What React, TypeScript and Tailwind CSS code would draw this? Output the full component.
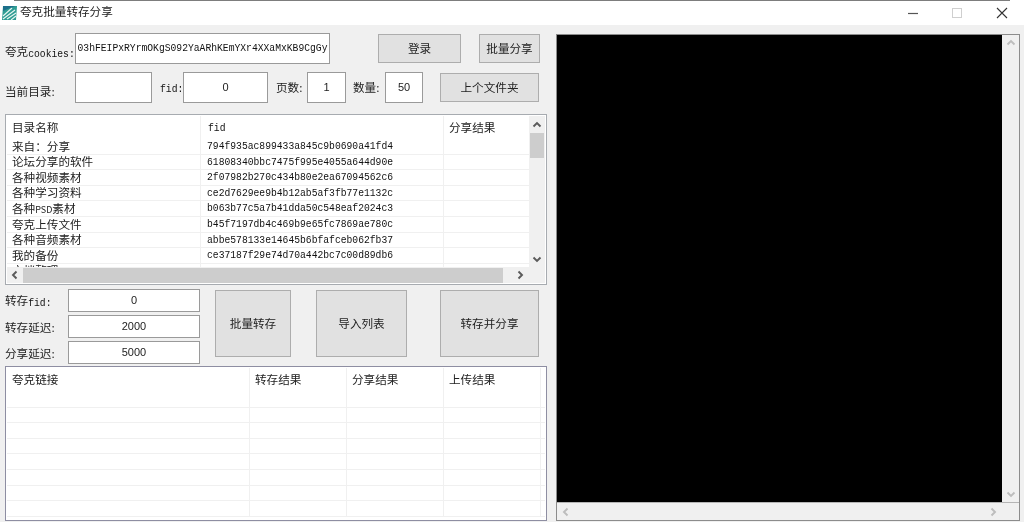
import React from "react";

const SANS = "font-['Noto_Sans_CJK_SC',sans-serif]";

function Lat({ children }: { children: React.ReactNode }) {
  return <span className="inline-block font-['Liberation_Mono',monospace] text-[9.7px] text-[#111] scale-y-[1.15] translate-y-px">{children}</span>;
}

function Chevron({ dir, light, className }: { dir: "up" | "down" | "left" | "right"; light?: boolean; className?: string }) {
  const d = {
    up: "M1.5 6.5 L5 3 L8.5 6.5",
    down: "M1.5 3.5 L5 7 L8.5 3.5",
    left: "M6.5 1.5 L3 5 L6.5 8.5",
    right: "M3.5 1.5 L7 5 L3.5 8.5",
  }[dir];
  return (
    <svg width="10" height="10" viewBox="0 0 10 10" className={className}>
      <path d={d} fill="none" stroke={light ? "#bdbdbd" : "#5a5a5a"} strokeWidth="1.9" />
    </svg>
  );
}

function Field({ w, h, className, children }: { w: string; h: string; className?: string; children?: React.ReactNode }) {
  return (
    <div className={`${w} ${h} ${className ?? ""} bg-white border border-[#9a9a9a] flex items-center justify-center text-[11px] text-[#222] font-['Liberation_Sans',sans-serif] overflow-hidden whitespace-nowrap`}>
      {children}
    </div>
  );
}

function Btn({ w, h, className, children }: { w: string; h: string; className?: string; children: React.ReactNode }) {
  return (
    <div className={`${w} ${h} ${className ?? ""} bg-[#e1e1e1] border border-[#adadad] flex items-center justify-center text-[11.6px] text-[#222]`}>
      {children}
    </div>
  );
}

function Label({ w, className, children }: { w: string; className?: string; children: React.ReactNode }) {
  return <div className={`${w} ${className ?? ""} shrink-0 text-[11.6px] text-[#222] whitespace-nowrap`}>{children}</div>;
}

const rows: [React.ReactNode, string][] = [
  ["来自：分享", "794f935ac899433a845c9b0690a41fd4"],
  ["论坛分享的软件", "61808340bbc7475f995e4055a644d90e"],
  ["各种视频素材", "2f07982b270c434b80e2ea67094562c6"],
  ["各种学习资料", "ce2d7629ee9b4b12ab5af3fb77e1132c"],
  [<>各种<span className="text-[9px]">PSD</span>素材</>, "b063b77c5a7b41dda50c548eaf2024c3"],
  ["夸克上传文件", "b45f7197db4c469b9e65fc7869ae780c"],
  ["各种音频素材", "abbe578133e14645b6bfafceb062fb37"],
  ["我的备份", "ce37187f29e74d70a442bc7c00d89db6"],
  ["文档整理", ""],
];

function App() {
  return (
    <div className={`w-[1024px] h-[522px] bg-[#f0f0f0] overflow-hidden flex flex-col blur-[0.35px] ${SANS}`}>
      {/* title bar */}
      <div className="h-[25px] bg-white shrink-0 flex flex-col">
        <div className="h-px bg-[#7d7d7d] mx-[14px]" />
        <div className="flex-1 flex items-center pl-px">
          <svg width="17" height="17" viewBox="0 0 17 17" className="shrink-0 mt-px">
            <path d="M2 1 H16 L15 15 H1 Z" fill="#2f9c93" />
            <path d="M2 11 L11 3 M2 14 L14 5 M6 14 L15 8 M10 15 L15 11" stroke="#e6f5f0" strokeWidth="1.2" fill="none" />
            <path d="M2 1 H14 L2 6 Z" fill="#1c6f8a" />
          </svg>
          <div className="ml-[2px] text-[11.6px] text-[#222] -mt-[2px]">夸克批量转存分享</div>
          <div className="ml-auto flex items-center mr-[16px] -mt-[1px]">
            <svg width="12" height="12" viewBox="0 0 12 12"><path d="M1 6.5 H11" stroke="#555" strokeWidth="1.2" /></svg>
            <svg width="12" height="12" viewBox="0 0 12 12" className="ml-[32px]"><rect x="1.5" y="1.5" width="9" height="9" fill="none" stroke="#cfcfcf" strokeWidth="1" /></svg>
            <svg width="12" height="12" viewBox="0 0 12 12" className="ml-[33px]"><path d="M1 1 L11 11 M11 1 L1 11" stroke="#333" strokeWidth="1.1" /></svg>
          </div>
        </div>
      </div>

      <div className="flex pl-[5px] flex-1 min-h-0">
        {/* left column */}
        <div className="w-[542px] shrink-0 flex flex-col pt-[8px]">
          <div className="flex items-center h-[31px]">
            <Label w="w-[70px]" className="pt-[7px]">夸克<Lat>cookies:</Lat></Label>
            <Field w="w-[255px]" h="h-[31px]"><Lat>03hFEIPxRYrmOKgS092YaARhKEmYXr4XXaMxKB9CgGy</Lat></Field>
            <Btn w="w-[83px]" h="h-[29px]" className="ml-[48px]">登录</Btn>
            <Btn w="w-[61px]" h="h-[29px]" className="ml-[18px]">批量分享</Btn>
          </div>

          <div className="flex items-center h-[31px] mt-[8px]">
            <Label w="w-[70px]" className="pt-[8px]">当前目录:</Label>
            <Field w="w-[77px]" h="h-[31px]" />
            <Label w="w-[23px]" className="ml-[8px]"><Lat>fid:</Lat></Label>
            <Field w="w-[85px]" h="h-[31px]">0</Field>
            <Label w="w-[31px]" className="ml-[8px]">页数:</Label>
            <Field w="w-[39px]" h="h-[31px]">1</Field>
            <Label w="w-[32px]" className="ml-[7px]">数量:</Label>
            <Field w="w-[38px]" h="h-[31px]">50</Field>
            <Btn w="w-[99px]" h="h-[29px]" className="ml-[17px]">上个文件夹</Btn>
          </div>

          {/* directory list */}
          <div className="h-[171px] mt-[11px] border border-[#a7abb0] p-px bg-white flex flex-col">
            <div className="flex flex-1 min-h-0">
              <div className="flex-1 min-w-0 overflow-hidden">
                <div className="flex h-[23px] text-[11.6px] text-[#222] items-center">
                  <div className="w-[193px] pl-[5px]">目录名称</div>
                  <div className="w-[243px] pl-[7px] pt-[2px] border-l border-[#f0f0f0] h-full flex items-center"><Lat>fid</Lat></div>
                  <div className="flex-1 pl-[5px] border-l border-[#f0f0f0] h-full flex items-center">分享结果</div>
                </div>
                {rows.map(([name, fid], i) => (
                  <div key={i} className="flex h-[15.6px] border-b border-[#f0f0f0] items-center text-[11.6px] text-[#222] whitespace-nowrap">
                    <div className="w-[193px] pl-[5px]">{name}</div>
                    <div className="w-[243px] pl-[6px] border-l border-[#f0f0f0] h-full flex items-center"><Lat>{fid}</Lat></div>
                    <div className="flex-1 border-l border-[#f0f0f0] h-full" />
                  </div>
                ))}
              </div>
              <div className="w-[16px] shrink-0 bg-[#f0f0f0] flex flex-col items-center">
                <div className="h-[17px] flex items-center justify-center"><Chevron dir="up" /></div>
                <div className="w-[14px] h-[25px] bg-[#cdcdcd]" />
                <div className="mt-auto h-[17px] flex items-center justify-center"><Chevron dir="down" /></div>
              </div>
            </div>
            <div className="h-[16px] shrink-0 bg-[#f0f0f0] flex items-center">
              <div className="w-[16px] flex justify-center"><Chevron dir="left" /></div>
              <div className="w-[480px] h-[15px] bg-[#cdcdcd]" />
              <div className="w-[34px] flex justify-center"><Chevron dir="right" /></div>
            </div>
          </div>

          {/* transfer controls */}
          <div className="flex mt-[4px] h-[74px]">
            <div className="flex flex-col gap-[3px]">
              <div className="flex items-center">
                <Label w="w-[63px]" className="pt-px">转存<Lat>fid:</Lat></Label>
                <Field w="w-[132px]" h="h-[23px]">0</Field>
              </div>
              <div className="flex items-center">
                <Label w="w-[63px]" className="pt-[3px]">转存延迟:</Label>
                <Field w="w-[132px]" h="h-[23px]">2000</Field>
              </div>
              <div className="flex items-center">
                <Label w="w-[63px]" className="pt-[3px]">分享延迟:</Label>
                <Field w="w-[132px]" h="h-[23px]">5000</Field>
              </div>
            </div>
            <Btn w="w-[76px]" h="h-[67px]" className="ml-[15px] mt-px">批量转存</Btn>
            <Btn w="w-[91px]" h="h-[67px]" className="ml-[25px] mt-px">导入列表</Btn>
            <Btn w="w-[99px]" h="h-[67px]" className="ml-[33px] mt-px">转存并分享</Btn>
          </div>

          {/* links list */}
          <div className="h-[155px] mt-[3px] border border-[#8e8ea2] bg-white p-px overflow-hidden">
            <div className="flex h-[24px] text-[11.6px] text-[#222] items-center">
              <div className="w-[242px] pl-[5px]">夸克链接</div>
              <div className="w-[97px] pl-[5px] border-l border-[#f0f0f0] h-full flex items-center">转存结果</div>
              <div className="w-[97px] pl-[5px] border-l border-[#f0f0f0] h-full flex items-center">分享结果</div>
              <div className="w-[97px] pl-[5px] border-l border-[#f0f0f0] h-full flex items-center">上传结果</div>
              <div className="flex-1 border-l border-[#f0f0f0] h-full" />
            </div>
            {[0, 1, 2, 3, 4, 5, 6, 7].map((i) => (
              <div key={i} className="flex h-[15.6px] border-b border-[#f0f0f0]">
                <div className="w-[242px]" />
                <div className="w-[97px] border-l border-[#f0f0f0]" />
                <div className="w-[97px] border-l border-[#f0f0f0]" />
                <div className="w-[97px] border-l border-[#f0f0f0]" />
                <div className="flex-1 border-l border-[#f0f0f0]" />
              </div>
            ))}
          </div>
        </div>

        {/* right panel */}
        <div className="w-[464px] h-[487px] ml-[9px] mt-[9px] shrink-0 border border-[#8c8c8c] bg-[#f0f0f0] flex flex-col">
          <div className="flex flex-1 min-h-0">
            <div className="flex-1 bg-black" />
            <div className="w-[17px] shrink-0 flex flex-col items-center pt-[3px] pb-[3px] justify-between">
              <Chevron dir="up" light />
              <Chevron dir="down" light />
            </div>
          </div>
          <div className="h-[18px] shrink-0 flex items-center justify-between pl-[4px] pr-[21px] border-t border-[#b5b5b5]">
            <Chevron dir="left" light />
            <Chevron dir="right" light />
          </div>
        </div>
      </div>
    </div>
  );
}

export default App;
